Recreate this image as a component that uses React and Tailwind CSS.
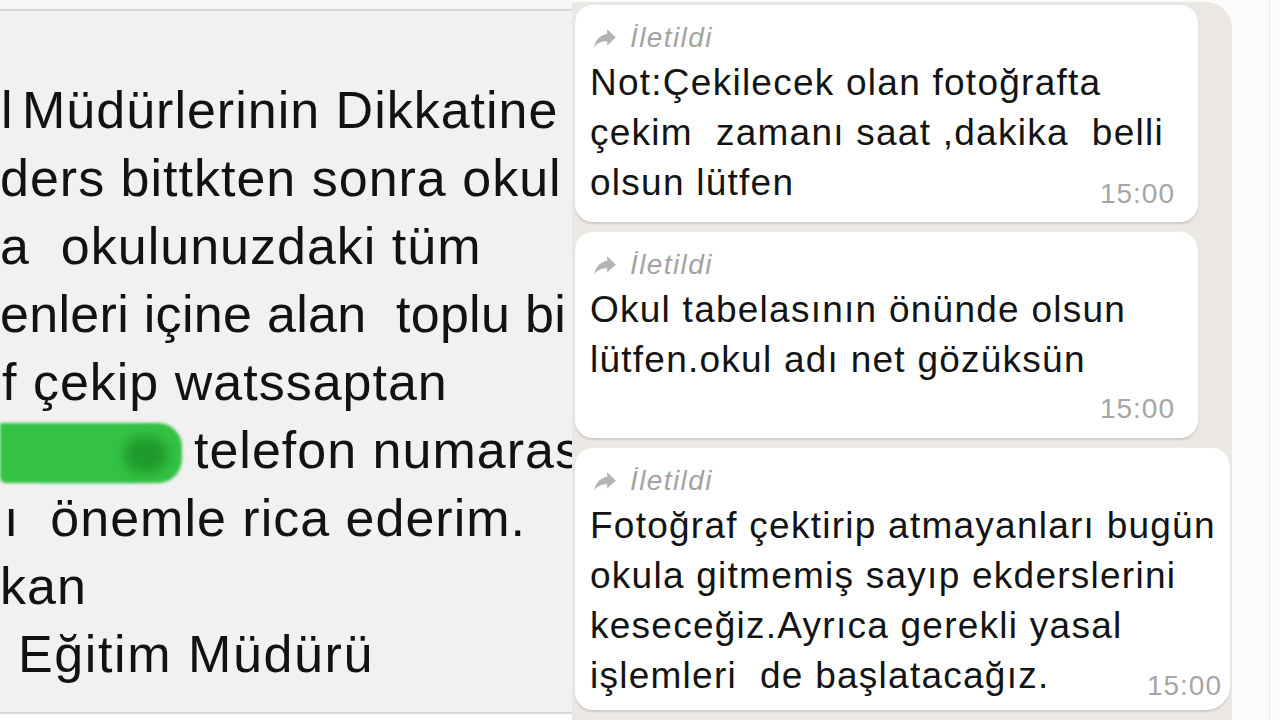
const leftLines = [
  { pad: 'pl-0', text: 'ders bittkten sonra okul' },
  { pad: 'pl-0', text: 'a  okulunuzdaki tüm' },
  { pad: 'pl-0 tracking-[0.3px]', text: 'enleri içine alan  toplu bi' },
  { pad: 'pl-[2px]', text: 'f çekip watssaptan' },
];

const ForwardIcon = () => (
  <svg viewBox="0 0 24 24" className="w-[30px] h-[26px] fill-[#b3b3b3]">
    <path d="M14 8V4l8 7.5-8 7.5v-4.1c-5.5 0-9.2 1.7-12 5.6 1.1-5.6 4.4-11.1 12-12.5z" />
  </svg>
);

const Bubble = ({ lines, className, timePos }) => (
  <div className={`relative bg-white rounded-[18px] shadow-[0_2px_2px_rgba(0,0,0,0.12)] pl-[15px] pt-[17px] ${className}`}>
    <div className="flex items-center gap-[10px] h-[32px]">
      <ForwardIcon />
      <span className="italic text-[28px] tracking-[1.4px] text-[#a3a3a3] leading-none">İletildi</span>
    </div>
    <div className="mt-[4px] text-[37px] leading-[50px] text-[#141414] tracking-[1.25px]">
      {lines.map((l, i) => (
        <div key={i} className="whitespace-pre">{l}</div>
      ))}
    </div>
    <span className={`absolute ${timePos} text-[28px] tracking-[1px] leading-none text-[#a6a6a6]`}>15:00</span>
  </div>
);

export default function App() {
  return (
    <div
      className="w-[1280px] h-[720px] overflow-hidden flex bg-[#fcfcfc]"
      style={{ fontFamily: '"Liberation Sans", Arial, sans-serif' }}
    >
      <div className="w-[572px] h-full flex flex-col shrink-0">
        <div className="h-[11px] bg-[#f6f6f6] border-b-2 border-[#d6d6d6]" />
        <div className="flex-1 bg-[#f1f1f1] overflow-hidden text-[#121212] text-[52px] leading-[68px] tracking-[1px] pt-[65px]">
          <div className="whitespace-pre pl-[1px]">
            <span className="[word-spacing:-7px]">l </span>Müdürlerinin Dikkatine
          </div>
          {leftLines.map((l, i) => (
            <div key={i} className={`whitespace-pre ${l.pad}`}>{l.text}</div>
          ))}
          <div className="whitespace-pre flex items-center">
            <span className="relative inline-block w-[182px] h-[60px] mt-[6px] shrink-0">
              <span className="absolute left-[40px] bottom-[-2px] w-[96px] h-[6px] bg-[#cdeef4]" />
              <span className="absolute inset-0 rounded-r-[24px] rounded-bl-[6px] bg-[#33c244] blur-[1.5px]" />
              <span className="absolute right-[14px] top-[14px] w-[44px] h-[36px] rounded-full bg-[#1f9a2c] blur-[6px]" />
            </span>
            <span className="pl-[12px]">telefon numaras</span>
          </div>
          <div className="whitespace-pre pl-[4px]">ı  önemle rica ederim.</div>
          <div className="whitespace-pre">kan</div>
          <div className="whitespace-pre pl-[18px] tracking-[1.6px]">Eğitim Müdürü</div>
        </div>
        <div className="h-[8px] bg-white border-t-2 border-[#d8d8d8]" />
      </div>
      <div className="w-[660px] h-full shrink-0 bg-[#ebe7e2] rounded-tr-[26px] mt-[2px] pl-[3px] pt-[3px] flex flex-col gap-[10px]">
        <Bubble
          className="w-[623px] pb-[14px]"
          timePos="right-[23px] bottom-[14px]"
          lines={['Not:Çekilecek olan fotoğrafta', 'çekim  zamanı saat ,dakika  belli', 'olsun lütfen']}
        />
        <Bubble
          className="w-[623px] pb-[53px]"
          timePos="right-[23px] bottom-[15px]"
          lines={['Okul tabelasının önünde olsun', 'lütfen.okul adı net gözüksün']}
        />
        <Bubble
          className="w-[655px] pb-[9px] rounded-br-[24px]"
          timePos="right-[8px] bottom-[10px]"
          lines={['Fotoğraf çektirip atmayanları bugün', 'okula gitmemiş sayıp ekderslerini', 'keseceğiz.Ayrıca gerekli yasal', 'işlemleri  de başlatacağız.']}
        />
      </div>
      <div className="flex-1 h-full flex justify-end pr-[10px]">
        <div className="w-px h-full bg-[#ececec]" />
      </div>
    </div>
  );
}
